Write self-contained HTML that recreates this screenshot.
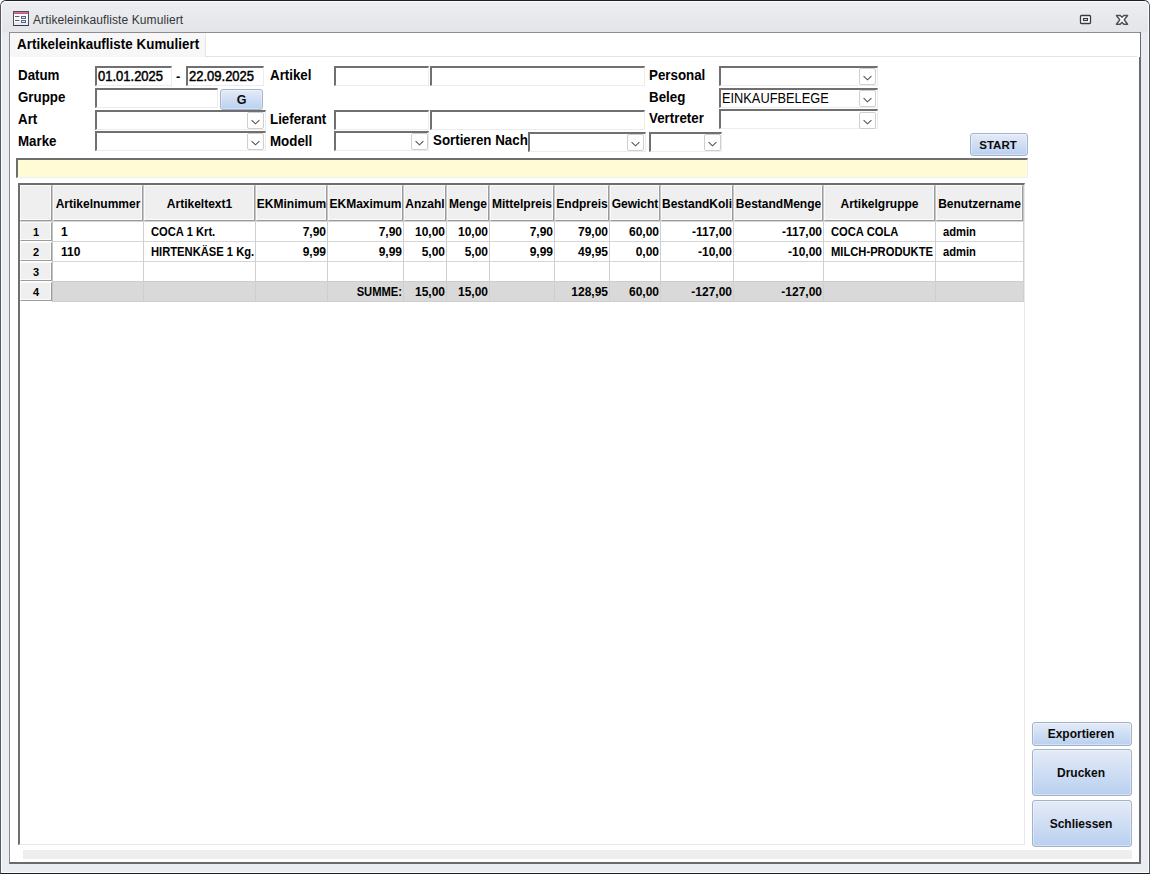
<!DOCTYPE html>
<html><head><meta charset="utf-8">
<style>
*{box-sizing:border-box;margin:0;padding:0}
html,body{width:1150px;height:874px;overflow:hidden;background:#fff;font-family:"Liberation Sans",sans-serif;color:#000}
.a{position:absolute}
#win{left:0;top:0;width:1150px;height:874px;background:linear-gradient(#eceef1 0px,#e3e5e9 31px,#e9ecf0 32px);border:1px solid #55595d;border-top-color:#1e1f21;border-bottom-color:#1c1c1c;border-radius:6px 6px 0 0}
#win2{left:1px;top:1px;width:1148px;height:872px;border:1px solid #fbfcfd;border-radius:5px 5px 0 0}
#title{left:33px;top:12px;font-size:12px;line-height:16px;color:#353535;letter-spacing:0.1px;white-space:nowrap}
#panel{left:9px;top:32px;width:1132px;height:832px;background:#fff;border-left:1px solid #8b8c90;border-top:1px solid #8e8c90;border-right:2px solid #6a6a6a;border-bottom:2px solid #6a6a6a}
.lbl{font-size:13.33px;font-weight:bold;line-height:16px;white-space:nowrap;transform:scaleY(1.07);transform-origin:0 0}
.tb{background:#fff;border-top:2px solid #707070;border-left:2px solid #707070;border-bottom:1px solid #ececec;border-right:1px solid #ececec}
.dd{width:17px;height:17px;border:1px solid #cfcfcf;border-radius:2px;background:#fff}
.dd svg{position:absolute;left:3px;top:6px}
.btn{border:1px solid #a3b3c9;border-radius:3px;background:linear-gradient(#e5ebf7,#b9d0f0);box-shadow:inset 0 0 0 1px rgba(255,255,255,0.35);font-weight:bold;font-size:11.5px;text-align:center;color:#0a0a0a}
.it{transform:scaleY(1.09);transform-origin:0 0;white-space:nowrap}
.hc{background:#efefef;border-top:1px solid #fafafa;border-left:1px solid #fafafa;border-right:1px solid #9b9b9b;border-bottom:1px solid #9b9b9b;box-shadow:inset -1px -1px 0 #fbfbfb}
.ht{font-size:12px;font-weight:bold;line-height:15px;text-align:center;white-space:nowrap}
.rs{background:#efefef;border-top:1px solid #fbfbfb;border-left:1px solid #fbfbfb;border-right:1px solid #9b9b9b;border-bottom:1px solid #9b9b9b;box-shadow:inset -1px -1px 0 #fbfbfb}
.dt{font-size:11.2px;font-weight:bold;line-height:14px;white-space:nowrap;transform:scaleY(1.1);transform-origin:0 0}
.nt{font-size:12px;font-weight:bold;line-height:14px;white-space:nowrap}
.vl{width:1px;background:#cfcfcf}
.hl{height:1px;background:#d6d6d6}
</style></head><body>
<div id="win" class="a"></div>
<div id="win2" class="a"></div>
<!-- title icon -->
<svg class="a" style="left:13px;top:11px" width="16" height="16" viewBox="0 0 16 16">
<rect x="0.5" y="0.5" width="15" height="14" fill="#f9fafd" stroke="#4a5262"/>
<rect x="1" y="11" width="14" height="3" fill="#e6ebf5"/>
<rect x="0" y="14" width="16" height="1" fill="#343a46"/>
<rect x="1" y="1" width="14" height="2" fill="#c9597a"/>
<rect x="1" y="1" width="14" height="0.7" fill="#e07c98"/>
<rect x="2" y="5" width="4.5" height="1" fill="#5a6272"/>
<rect x="2" y="9" width="4.5" height="1" fill="#5a6272"/>
<rect x="8.5" y="5.5" width="4" height="2" fill="#dfe5ef" stroke="#5a6880"/>
<rect x="8.5" y="9.5" width="4" height="2" fill="#dfe5ef" stroke="#5a6880"/>
</svg>
<div id="title" class="a">Artikeleinkaufliste Kumuliert</div>
<!-- restore / close -->
<svg class="a" style="left:1079px;top:14px" width="14" height="12" viewBox="0 0 14 12">
<rect x="1.5" y="1.5" width="10" height="8" rx="1" fill="#fff" stroke="#3a3a3a" stroke-width="1.3"/>
<rect x="4.5" y="4.5" width="4" height="2" fill="#fff" stroke="#3a3a3a" stroke-width="1.2"/>
</svg>
<svg class="a" style="left:1115px;top:14px" width="14" height="12" viewBox="0 0 14 12">
<path d="M1.4 1.5 L5.2 1.5 L7 3.3 L8.8 1.5 L12.6 1.5 L9.2 5.8 L12.6 10.2 L8.8 10.2 L7 8.3 L5.2 10.2 L1.4 10.2 L4.8 5.8 Z" fill="#fff" stroke="#505050" stroke-width="1.4" stroke-linejoin="round"/>
</svg>
<div id="panel" class="a"></div>
<div class="a" style="left:1139px;top:33px;width:1px;height:24px;background:#fff"></div>

<!-- tab strip -->
<div class="a" style="left:10px;top:33px;width:195px;height:24px;background:#f7f7f7"></div>
<div class="a" style="left:205px;top:33px;width:932px;height:24px;border-left:1px solid #e6e6e6;border-bottom:1px solid #e3e3e3"></div>
<div class="a lbl" style="left:17px;top:36px;letter-spacing:0.05px">Artikeleinkaufliste Kumuliert</div>
<!-- labels -->
<div class="a lbl" style="left:18px;top:67px">Datum</div>
<div class="a lbl" style="left:18px;top:89px">Gruppe</div>
<div class="a lbl" style="left:18px;top:111px">Art</div>
<div class="a lbl" style="left:18px;top:133px">Marke</div>
<div class="a lbl" style="left:270px;top:67px">Artikel</div>
<div class="a lbl" style="left:270px;top:111px">Lieferant</div>
<div class="a lbl" style="left:270px;top:133px">Modell</div>
<div class="a lbl" style="left:433px;top:132px">Sortieren Nach</div>
<div class="a lbl" style="left:649px;top:67px">Personal</div>
<div class="a lbl" style="left:649px;top:89px">Beleg</div>
<div class="a lbl" style="left:649px;top:110px">Vertreter</div>
<!-- inputs -->
<div class="a tb" style="left:95px;top:66px;width:77px;height:20px"></div>
<div class="a it" style="left:98px;top:68px;font-size:13px;-webkit-text-stroke:0.45px #000;line-height:16px">01.01.2025</div>
<div class="a" style="left:176px;top:69px;font-size:13px;font-weight:bold;line-height:16px">-</div>
<div class="a tb" style="left:186px;top:66px;width:78px;height:20px"></div>
<div class="a it" style="left:189px;top:68px;font-size:13px;-webkit-text-stroke:0.45px #000;line-height:16px">22.09.2025</div>
<div class="a tb" style="left:95px;top:88px;width:123px;height:20px"></div>
<div class="a btn" style="left:220px;top:89px;width:43px;height:21px;line-height:20px;font-size:12.5px">G</div>
<div class="a tb" style="left:95px;top:110px;width:171px;height:20px"></div>
<div class="a dd" style="left:247px;top:112px"><svg width="9" height="6" viewBox="0 0 9 6"><path d="M0.6 1.1 L4.5 4.8 L8.4 1.1" fill="none" stroke="#505050" stroke-width="1.05"/></svg></div>
<div class="a tb" style="left:95px;top:131px;width:171px;height:20px"></div>
<div class="a dd" style="left:247px;top:133px"><svg width="9" height="6" viewBox="0 0 9 6"><path d="M0.6 1.1 L4.5 4.8 L8.4 1.1" fill="none" stroke="#505050" stroke-width="1.05"/></svg></div>

<div class="a tb" style="left:334px;top:66px;width:95px;height:20px"></div>
<div class="a tb" style="left:430px;top:66px;width:215px;height:20px"></div>
<div class="a tb" style="left:334px;top:110px;width:95px;height:20px"></div>
<div class="a tb" style="left:430px;top:110px;width:215px;height:20px"></div>
<div class="a tb" style="left:334px;top:131px;width:95px;height:20px"></div>
<div class="a dd" style="left:411px;top:133px"><svg width="9" height="6" viewBox="0 0 9 6"><path d="M0.6 1.1 L4.5 4.8 L8.4 1.1" fill="none" stroke="#505050" stroke-width="1.05"/></svg></div>
<div class="a tb" style="left:528px;top:132px;width:118px;height:20px"></div>
<div class="a dd" style="left:627px;top:134px"><svg width="9" height="6" viewBox="0 0 9 6"><path d="M0.6 1.1 L4.5 4.8 L8.4 1.1" fill="none" stroke="#505050" stroke-width="1.05"/></svg></div>
<div class="a tb" style="left:649px;top:132px;width:73px;height:20px"></div>
<div class="a dd" style="left:704px;top:134px"><svg width="9" height="6" viewBox="0 0 9 6"><path d="M0.6 1.1 L4.5 4.8 L8.4 1.1" fill="none" stroke="#505050" stroke-width="1.05"/></svg></div>

<div class="a tb" style="left:719px;top:66px;width:159px;height:20px"></div>
<div class="a dd" style="left:859px;top:68px"><svg width="9" height="6" viewBox="0 0 9 6"><path d="M0.6 1.1 L4.5 4.8 L8.4 1.1" fill="none" stroke="#505050" stroke-width="1.05"/></svg></div>
<div class="a tb" style="left:719px;top:88px;width:159px;height:20px"></div>
<div class="a it" style="left:722px;top:90px;font-size:12.8px;line-height:16px">EINKAUFBELEGE</div>
<div class="a dd" style="left:859px;top:90px"><svg width="9" height="6" viewBox="0 0 9 6"><path d="M0.6 1.1 L4.5 4.8 L8.4 1.1" fill="none" stroke="#505050" stroke-width="1.05"/></svg></div>
<div class="a tb" style="left:719px;top:109px;width:159px;height:20px"></div>
<div class="a dd" style="left:859px;top:112px"><svg width="9" height="6" viewBox="0 0 9 6"><path d="M0.6 1.1 L4.5 4.8 L8.4 1.1" fill="none" stroke="#505050" stroke-width="1.05"/></svg></div>

<div class="a btn" style="left:970px;top:133px;width:58px;height:23px;line-height:22px;padding-right:2px">START</div>
<!-- yellow bar -->
<div class="a" style="left:16px;top:158px;width:1012px;height:20px;background:#fffcd5;border-top:2px solid #6e6e6e;border-left:2px solid #6e6e6e;border-bottom:1px solid #f0f0f0;border-right:1px solid #f0f0f0"></div>
<div class="a" style="left:18px;top:183px;width:1007px;height:662px;background:#fff;border-top:2px solid #6e6e6e;border-left:2px solid #6e6e6e;border-right:1px solid #e8e8e8;border-bottom:1px solid #e8e8e8"></div>
<div class="a" style="left:20px;top:185px;width:1004px;height:37px;background:#c6c6c6"></div>
<div class="a hc" style="left:20px;top:185px;width:32px;height:36px"></div>
<div class="a hc" style="left:53px;top:185px;width:90px;height:36px"></div>
<div class="a ht" style="left:53px;top:197px;width:90px">Artikelnummer</div>
<div class="a hc" style="left:144px;top:185px;width:111px;height:36px"></div>
<div class="a ht" style="left:144px;top:197px;width:111px">Artikeltext1</div>
<div class="a hc" style="left:256px;top:185px;width:71px;height:36px"></div>
<div class="a ht" style="left:256px;top:197px;width:71px">EKMinimum</div>
<div class="a hc" style="left:328px;top:185px;width:75px;height:36px"></div>
<div class="a ht" style="left:328px;top:197px;width:75px">EKMaximum</div>
<div class="a hc" style="left:404px;top:185px;width:42px;height:36px"></div>
<div class="a ht" style="left:404px;top:197px;width:42px">Anzahl</div>
<div class="a hc" style="left:447px;top:185px;width:42px;height:36px"></div>
<div class="a ht" style="left:447px;top:197px;width:42px">Menge</div>
<div class="a hc" style="left:490px;top:185px;width:64px;height:36px"></div>
<div class="a ht" style="left:490px;top:197px;width:64px">Mittelpreis</div>
<div class="a hc" style="left:555px;top:185px;width:54px;height:36px"></div>
<div class="a ht" style="left:555px;top:197px;width:54px">Endpreis</div>
<div class="a hc" style="left:610px;top:185px;width:50px;height:36px"></div>
<div class="a ht" style="left:610px;top:197px;width:50px">Gewicht</div>
<div class="a hc" style="left:661px;top:185px;width:72px;height:36px"></div>
<div class="a ht" style="left:661px;top:197px;width:72px">BestandKoli</div>
<div class="a hc" style="left:734px;top:185px;width:89px;height:36px"></div>
<div class="a ht" style="left:734px;top:197px;width:89px">BestandMenge</div>
<div class="a hc" style="left:824px;top:185px;width:111px;height:36px"></div>
<div class="a ht" style="left:824px;top:197px;width:111px">Artikelgruppe</div>
<div class="a hc" style="left:936px;top:185px;width:87px;height:36px"></div>
<div class="a ht" style="left:936px;top:197px;width:87px">Benutzername</div>
<div class="a hl" style="left:53px;top:241px;width:970px"></div>
<div class="a hl" style="left:53px;top:261px;width:970px"></div>
<div class="a hl" style="left:53px;top:281px;width:970px"></div>
<div class="a hl" style="left:53px;top:301px;width:970px"></div>
<div class="a" style="left:53px;top:281px;width:970px;height:21px;background:#d9d9d9;border-top:1px solid #cdcdcd;border-bottom:1px solid #cfcfcf"></div>
<div class="a vl" style="left:143px;top:222px;height:80px"></div>
<div class="a vl" style="left:255px;top:222px;height:80px"></div>
<div class="a vl" style="left:327px;top:222px;height:80px"></div>
<div class="a vl" style="left:403px;top:222px;height:80px"></div>
<div class="a vl" style="left:446px;top:222px;height:80px"></div>
<div class="a vl" style="left:489px;top:222px;height:80px"></div>
<div class="a vl" style="left:554px;top:222px;height:80px"></div>
<div class="a vl" style="left:609px;top:222px;height:80px"></div>
<div class="a vl" style="left:660px;top:222px;height:80px"></div>
<div class="a vl" style="left:733px;top:222px;height:80px"></div>
<div class="a vl" style="left:823px;top:222px;height:80px"></div>
<div class="a vl" style="left:935px;top:222px;height:80px"></div>
<div class="a vl" style="left:1023px;top:222px;height:80px"></div>
<div class="a" style="left:52px;top:221px;width:1px;height:81px;background:#c6c6c6"></div>
<div class="a" style="left:20px;top:221px;width:1004px;height:1px;background:#d4d4d4"></div>
<div class="a rs" style="left:20px;top:222px;width:32px;height:19px"></div>
<div class="a nt" style="left:20px;top:225px;width:32px;text-align:center;font-size:11px">1</div>
<div class="a nt" style="left:61px;top:225px">1</div>
<div class="a dt" style="left:151px;top:224px">COCA 1 Krt.</div>
<div class="a nt" style="left:256px;top:225px;width:70px;text-align:right">7,90</div>
<div class="a nt" style="left:328px;top:225px;width:74px;text-align:right">7,90</div>
<div class="a nt" style="left:404px;top:225px;width:41px;text-align:right">10,00</div>
<div class="a nt" style="left:447px;top:225px;width:41px;text-align:right">10,00</div>
<div class="a nt" style="left:490px;top:225px;width:63px;text-align:right">7,90</div>
<div class="a nt" style="left:555px;top:225px;width:53px;text-align:right">79,00</div>
<div class="a nt" style="left:610px;top:225px;width:49px;text-align:right">60,00</div>
<div class="a nt" style="left:661px;top:225px;width:71px;text-align:right">-117,00</div>
<div class="a nt" style="left:734px;top:225px;width:88px;text-align:right">-117,00</div>
<div class="a dt" style="left:831px;top:224px">COCA COLA</div>
<div class="a dt" style="left:943px;top:224px">admin</div>
<div class="a rs" style="left:20px;top:242px;width:32px;height:19px"></div>
<div class="a nt" style="left:20px;top:245px;width:32px;text-align:center;font-size:11px">2</div>
<div class="a nt" style="left:61px;top:245px">110</div>
<div class="a dt" style="left:151px;top:244px">HIRTENKÄSE 1 Kg.</div>
<div class="a nt" style="left:256px;top:245px;width:70px;text-align:right">9,99</div>
<div class="a nt" style="left:328px;top:245px;width:74px;text-align:right">9,99</div>
<div class="a nt" style="left:404px;top:245px;width:41px;text-align:right">5,00</div>
<div class="a nt" style="left:447px;top:245px;width:41px;text-align:right">5,00</div>
<div class="a nt" style="left:490px;top:245px;width:63px;text-align:right">9,99</div>
<div class="a nt" style="left:555px;top:245px;width:53px;text-align:right">49,95</div>
<div class="a nt" style="left:610px;top:245px;width:49px;text-align:right">0,00</div>
<div class="a nt" style="left:661px;top:245px;width:71px;text-align:right">-10,00</div>
<div class="a nt" style="left:734px;top:245px;width:88px;text-align:right">-10,00</div>
<div class="a dt" style="left:831px;top:244px">MILCH-PRODUKTE</div>
<div class="a dt" style="left:943px;top:244px">admin</div>
<div class="a rs" style="left:20px;top:262px;width:32px;height:19px"></div>
<div class="a nt" style="left:20px;top:265px;width:32px;text-align:center;font-size:11px">3</div>
<div class="a rs" style="left:20px;top:282px;width:32px;height:19px"></div>
<div class="a nt" style="left:20px;top:285px;width:32px;text-align:center;font-size:11px">4</div>
<div class="a dt" style="left:328px;top:284px;width:74px;text-align:right">SUMME:</div>
<div class="a nt" style="left:404px;top:285px;width:41px;text-align:right">15,00</div>
<div class="a nt" style="left:447px;top:285px;width:41px;text-align:right">15,00</div>
<div class="a nt" style="left:555px;top:285px;width:53px;text-align:right">128,95</div>
<div class="a nt" style="left:610px;top:285px;width:49px;text-align:right">60,00</div>
<div class="a nt" style="left:661px;top:285px;width:71px;text-align:right">-127,00</div>
<div class="a nt" style="left:734px;top:285px;width:88px;text-align:right">-127,00</div>
<div class="a" style="left:23px;top:850px;width:1109px;height:9px;background:#eeeeee"></div>
<div class="a btn" style="left:1032px;top:722px;width:100px;height:24px;line-height:22px;font-size:12px;padding-right:2px">Exportieren</div>
<div class="a btn" style="left:1032px;top:749px;width:100px;height:47px;line-height:47px;font-size:12px;padding-right:2px">Drucken</div>
<div class="a btn" style="left:1032px;top:800px;width:100px;height:47px;line-height:47px;font-size:12px;padding-right:2px">Schliessen</div>
</body></html>
